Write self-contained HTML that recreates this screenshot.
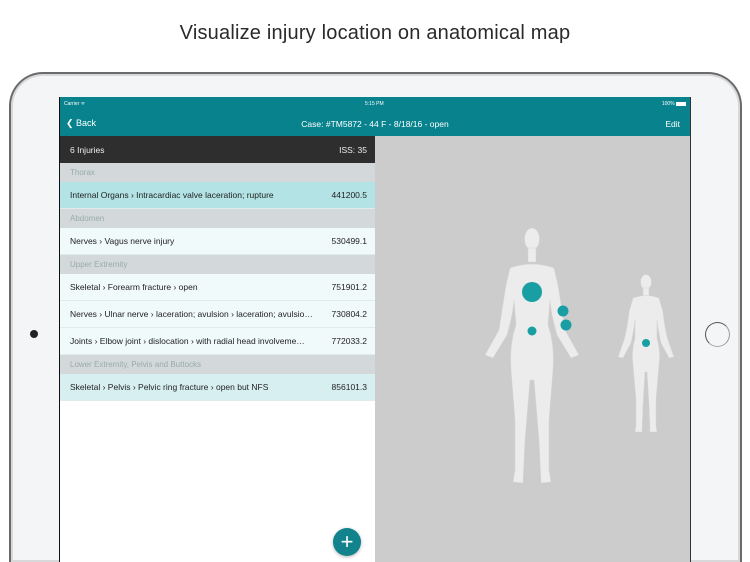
<!DOCTYPE html>
<html style="width:750px;height:562px;overflow:hidden"><head><meta charset="utf-8"><style>
*{margin:0;padding:0;box-sizing:border-box}
body{width:750px;height:562px;overflow:hidden;background:#fff;font-family:"Liberation Sans",sans-serif;position:relative}
.title{position:absolute;top:22px;left:0;width:750px;text-align:center;font-size:20px;color:#2a2a2a;letter-spacing:.2px}
.ipad{position:absolute;left:9px;top:72px;width:733px;height:490px;border-radius:34px 34px 0 0;background:#f4f5f7;border:2px solid #6a6a6a;border-bottom:none;box-shadow:inset 0 0 0 2px #d8d8da}
.cam{position:absolute;left:30px;top:330px;width:8px;height:8px;border-radius:50%;background:#222}
.home{position:absolute;left:705px;top:322px;width:25px;height:25px;border-radius:50%;border:1.5px solid #555;border-right-color:#999;border-bottom-color:#aaa}
.screen{position:absolute;left:59px;top:97px;width:632px;height:465px;border-left:1.5px solid #111;border-right:1.5px solid #333;background:#ccc;overflow:hidden}
.status{position:absolute;left:0;top:0;width:100%;height:15px;background:#08838e;color:#fff;font-size:5px}
.nav{position:absolute;left:0;top:15px;width:100%;height:24px;background:#08838e;color:#fff;font-size:9px}
.left{position:absolute;left:0;top:39px;width:315px;height:430px;background:#fff}
.hdr{height:27px;background:#2e2e2e;color:#eee;font-size:8.5px;display:flex;justify-content:space-between;align-items:center;padding:0 8px 0 10px}
.sec{height:19px;background:#d3d9da;color:#9aa;font-size:8px;line-height:19px;padding-left:10px}
.row{height:27px;background:#f1fafa;color:#222;font-size:8.5px;display:flex;justify-content:space-between;align-items:center;padding:0 8px 0 10px;border-bottom:1px solid #e0ecec}
.fab{position:absolute;left:333px;top:528px;width:28px;height:28px;border-radius:50%;background:#12838c;color:#fff;font-size:22px;line-height:27px;text-align:center;box-shadow:0 1px 3px rgba(0,0,0,.3)}
</style></head><body>
<div class="title">Visualize injury location on anatomical map</div>
<div class="ipad"></div>
<div class="cam"></div>
<div class="home"></div>
<div class="screen">
 <div class="status"><span style="position:absolute;left:4px;top:4px">Carrier ᯤ</span><span style="position:absolute;left:305px;top:4px">5:15 PM</span><span style="position:absolute;right:4px;top:4px">100% <span style="display:inline-block;width:10px;height:4px;background:#fff;vertical-align:middle"></span></span></div>
 <div class="nav"><span style="position:absolute;left:6px;top:6px;font-size:9px">❮ Back</span><span style="position:absolute;left:0;width:100%;text-align:center;top:7px;font-size:8.5px">Case: #TM5872 - 44 F - 8/18/16 - open</span><span style="position:absolute;right:10px;top:7px;font-size:8.5px">Edit</span></div>
 <div class="left">
  <div class="hdr"><span>6 Injuries</span><span>ISS: 35</span></div>
  <div class="sec">Thorax</div>
  <div class="row" style="background:#b3e3e5"><span>Internal Organs › Intracardiac valve laceration; rupture</span><span>441200.5</span></div>
  <div class="sec">Abdomen</div>
  <div class="row"><span>Nerves › Vagus nerve injury</span><span>530499.1</span></div>
  <div class="sec">Upper Extremity</div>
  <div class="row"><span>Skeletal › Forearm fracture › open</span><span>751901.2</span></div>
  <div class="row"><span>Nerves › Ulnar nerve › laceration; avulsion › laceration; avulsio…</span><span>730804.2</span></div>
  <div class="row"><span>Joints › Elbow joint › dislocation › with radial head involveme…</span><span>772033.2</span></div>
  <div class="sec">Lower Extremity, Pelvis and Buttocks</div>
  <div class="row" style="background:#d8eff2"><span>Skeletal › Pelvis › Pelvic ring fracture › open but NFS</span><span>856101.3</span></div>
 </div>
 <svg style="position:absolute;left:0;top:0" width="632" height="465" viewBox="59 97 632 465">
  <g fill="#ececec" stroke="#d4d4d4" stroke-width=".5">
   <ellipse cx="531" cy="239" rx="7.5" ry="11"/>
   <rect x="527" y="248" width="8" height="14"/>
   <path d="M509 268 Q531 260 553 268 L557 285 Q561 310 564 330 L578 355 L570 358 L556 335 Q550 315 549 300 L547 325 Q554 345 552 370 L548 420 L548 470 L550 482 L540 483 L538 440 L533 380 L529 380 L524 440 L522 483 L512 482 L514 470 L514 420 L510 370 Q508 345 515 325 L513 300 Q512 315 506 335 L492 358 L484 355 L498 330 Q501 310 505 285 Z"/>
   <ellipse cx="645" cy="282" rx="5.5" ry="7.5"/>
   <rect x="642" y="288" width="6" height="9"/>
   <path d="M632 298 Q645 293 658 298 L662 312 Q664 330 667 340 L673 357 L668 358 L660 343 Q657 330 656 320 L656 338 Q660 352 658 365 L655 400 L655 425 L656 432 L649 432 L648 405 L646 372 L644 372 L642 405 L641 432 L634 432 L635 425 L635 400 L632 365 Q630 352 634 338 L634 320 Q633 330 630 343 L622 358 L617 357 L623 340 Q626 330 628 312 Z"/>
  </g>
  <g fill="#199ea3">
   <circle cx="531" cy="292" r="10"/>
   <circle cx="562" cy="311" r="5.5"/>
   <circle cx="565" cy="325" r="5.5"/>
   <circle cx="531" cy="331" r="4.5"/>
   <circle cx="645" cy="343" r="4"/>
  </g>
 </svg>
</div>
<div class="fab">+</div>
</body></html>
